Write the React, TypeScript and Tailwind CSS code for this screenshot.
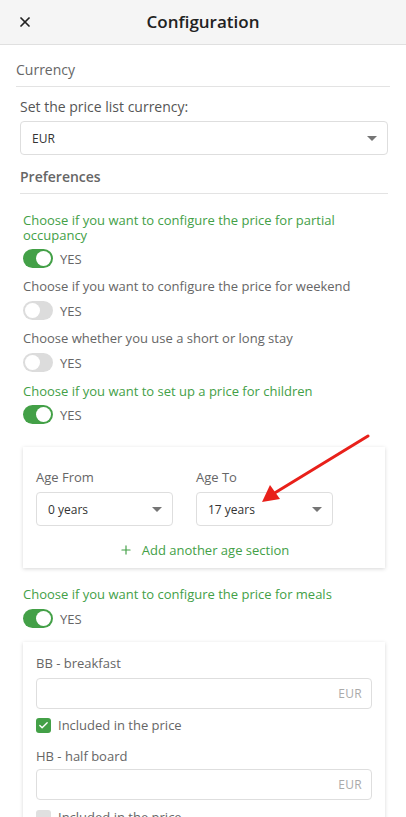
import React, { useState } from 'react';
import { X, Plus, Check } from 'lucide-react';

const font = { fontFamily: '"Open Sans", "Liberation Sans", sans-serif' };

const Toggle: React.FC<{ on: boolean; onChange: () => void }> = ({ on, onChange }) => (
  <button onClick={onChange} className="flex items-center gap-[7px] h-[19px]">
    <span
      className={
        on
          ? 'relative w-[30px] h-[19px] rounded-full bg-[#43a047]'
          : 'relative w-[30px] h-[19px] rounded-full bg-[#dcdcdc]'
      }
    >
      <span
        className={
          on
            ? 'absolute top-[2px] left-[13px] w-[15px] h-[15px] rounded-full bg-white'
            : 'absolute top-[2px] left-[2px] w-[15px] h-[15px] rounded-full bg-white'
        }
      />
    </span>
    <span className="text-[13px] leading-[16px] text-[#666]">YES</span>
  </button>
);

const Caret = () => (
  <svg width="10" height="5" viewBox="0 0 10 5" className="shrink-0">
    <path d="M0 0 L10 0 L5 5 Z" fill="#757575" />
  </svg>
);

const Select: React.FC<{ value: string; className?: string }> = ({ value, className }) => (
  <div
    className={
      'flex items-center justify-between h-[34px] pl-[11px] pr-[10px] border border-[#dedede] rounded-[4px] bg-white ' +
      (className || '')
    }
  >
    <span className="text-[12px] leading-[15px] text-[#333]">{value}</span>
    <Caret />
  </div>
);

const PriceInput = () => (
  <div className="flex items-center justify-end h-[31px] px-[9px] border border-[#dedede] rounded-[4px] bg-white">
    <span className="text-[12px] leading-[15px] text-[#aaa] tracking-wide">EUR</span>
  </div>
);

export default function App() {
  const [prefs, setPrefs] = useState({
    partial: true,
    weekend: false,
    stay: false,
    children: true,
    meals: true,
  });
  const flip = (k: keyof typeof prefs) => setPrefs(p => ({ ...p, [k]: !p[k] }));

  const label = (on: boolean) =>
    on ? 'text-[13px] leading-[15px] text-[#43a047]' : 'text-[13px] leading-[15px] text-[#666]';

  return (
    <div style={font} className="w-[406px] min-h-[817px] bg-white overflow-hidden">
      {/* Header */}
      <div className="relative h-[45px] flex items-center justify-center bg-[#f5f5f5] border-b border-[#e0e0e0]">
        <X className="absolute left-[17px] top-[14px] w-[16px] h-[16px] text-[#222]" strokeWidth={2.6} />
        <h1 className="text-[17px] font-semibold text-[#222]">Configuration</h1>
      </div>

      <div className="px-[16px]">
        <div className="pt-[16px] pb-[8px] border-b border-[#e3e3e3] text-[14px] leading-[17px] font-medium text-[#666]">
          Currency
        </div>
      </div>

      <div className="px-[20px] pr-[18px]">
        <p className="mt-[11px] text-[14px] leading-[17px] text-[#555]">Set the price list currency:</p>
        <Select value="EUR" className="mt-[6px]" />

        <div className="mt-[13px] pb-[8px] border-b border-[#e3e3e3] text-[14px] leading-[17px] font-semibold text-[#666]">
          Preferences
        </div>
      </div>

      <div className="px-[23px] pt-[19px]">
        <p className={label(prefs.partial)}>
          Choose if you want to configure the price for partial occupancy
        </p>
        <div className="mt-[6px]"><Toggle on={prefs.partial} onChange={() => flip('partial')} /></div>

        <p className={label(false) + ' mt-[11px]'}>Choose if you want to configure the price for weekend</p>
        <div className="mt-[7px]"><Toggle on={prefs.weekend} onChange={() => flip('weekend')} /></div>

        <p className={label(false) + ' mt-[11px]'}>Choose whether you use a short or long stay</p>
        <div className="mt-[7px]"><Toggle on={prefs.stay} onChange={() => flip('stay')} /></div>

        <p className={label(prefs.children) + ' mt-[12px]'}>Choose if you want to set up a price for children</p>
        <div className="mt-[6px]"><Toggle on={prefs.children} onChange={() => flip('children')} /></div>
      </div>

      {/* Children ages */}
      <div className="relative mx-[23px] mr-[21px] mt-[23px] bg-white shadow-[0_1px_4px_rgba(0,0,0,0.16)] px-[13px] pt-[22px] pb-[10px]">
        <div className="flex gap-[23px]">
          <div className="w-[137px]">
            <p className="text-[13px] leading-[16px] text-[#666]">Age From</p>
            <Select value="0 years" className="mt-[7px]" />
          </div>
          <div className="w-[137px]">
            <p className="text-[13px] leading-[16px] text-[#666]">Age To</p>
            <Select value="17 years" className="mt-[7px]" />
          </div>
        </div>
        <button className="mt-[16px] mx-auto flex items-center gap-[9px] text-[13px] leading-[16px] text-[#43a047]">
          <Plus className="w-[14px] h-[14px]" strokeWidth={2} />
          Add another age section
        </button>
        {/* annotation arrow */}
        <svg className="absolute left-[230px] top-[-13px] pointer-events-none" width="120" height="75" viewBox="0 0 120 75">
          <line x1="115" y1="2" x2="20" y2="60" stroke="#e8201a" strokeWidth="3" strokeLinecap="round" />
          <path d="M9 68 L17 51 L27 65 Z" fill="#e8201a" />
        </svg>
      </div>

      <div className="px-[23px] pt-[19px]">
        <p className={label(prefs.meals)}>Choose if you want to configure the price for meals</p>
        <div className="mt-[7px]"><Toggle on={prefs.meals} onChange={() => flip('meals')} /></div>
      </div>

      {/* Meals */}
      <div className="mx-[23px] mr-[21px] mt-[14px] bg-white shadow-[0_1px_4px_rgba(0,0,0,0.16)] px-[13px] pt-[13px] pb-[10px]">
        <p className="text-[13px] leading-[16px] text-[#666]">BB - breakfast</p>
        <div className="mt-[7px]"><PriceInput /></div>
        <div className="mt-[8px] flex items-center gap-[7px]">
          <span className="w-[15px] h-[15px] rounded-[3px] bg-[#43a047] flex items-center justify-center">
            <Check className="w-[11px] h-[11px] text-white" strokeWidth={3} />
          </span>
          <span className="text-[13px] leading-[16px] text-[#666]">Included in the price</span>
        </div>
        <p className="mt-[15px] text-[13px] leading-[16px] text-[#666]">HB - half board</p>
        <div className="mt-[5px]"><PriceInput /></div>
        <div className="mt-[9px] flex items-center gap-[7px]">
          <span className="w-[15px] h-[15px] rounded-[3px] bg-[#e0e0e0]" />
          <span className="text-[13px] leading-[16px] text-[#666]">Included in the price</span>
        </div>
      </div>
    </div>
  );
}
